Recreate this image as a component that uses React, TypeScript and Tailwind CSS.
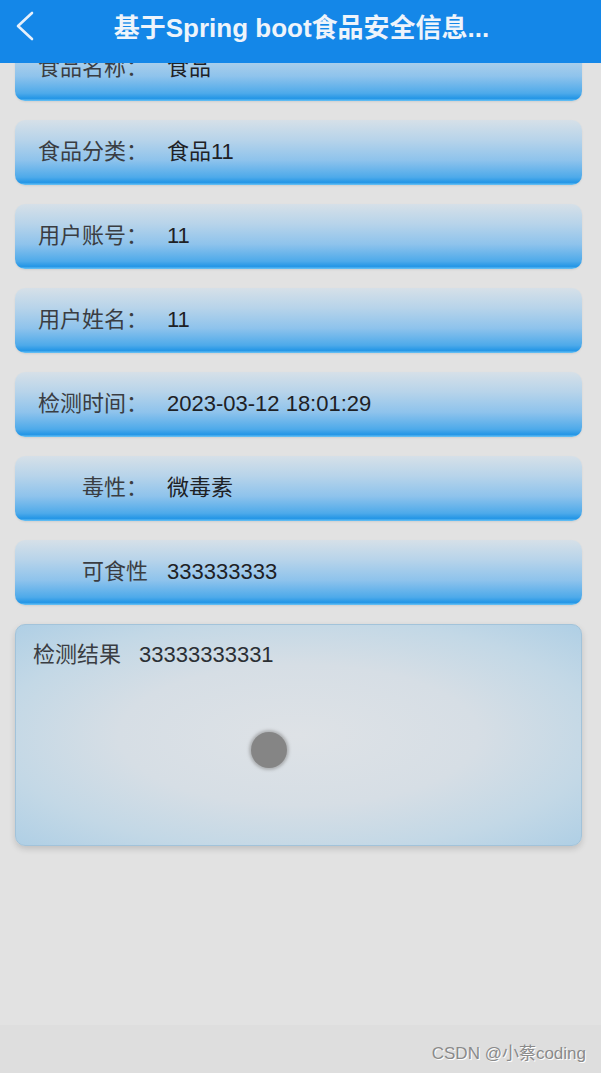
const rows = [
  { label: "食品名称：", value: "食品" },
  { label: "食品分类：", value: "食品11" },
  { label: "用户账号：", value: "11" },
  { label: "用户姓名：", value: "11" },
  { label: "检测时间：", value: "2023-03-12 18:01:29" },
  { label: "毒性：", value: "微毒素" },
  { label: "可食性", value: "333333333" },
];

function BackIcon() {
  return (
    <svg width="20" height="32" viewBox="0 0 20 32" fill="none">
      <polyline
        points="17,3 3,16 17,29"
        stroke="#e6f0fb"
        strokeWidth="2.6"
        strokeLinecap="round"
        strokeLinejoin="round"
      />
    </svg>
  );
}

function Row({ label, value }: { label: string; value: string }) {
  return (
    <div className="flex items-center h-[65px] pb-[2px] rounded-[10px] bg-[linear-gradient(to_bottom,#d6e0e8_0%,#b8d4ea_30%,#8ec3ec_62%,#4eaaea_88%,#2496e6_96%,#6cc4f6_100%)] shadow-[0_1px_2px_rgba(0,0,0,0.08)]">
      <div className="w-[133px] pl-[22px] text-right text-[22px] text-[#3a3d42] whitespace-nowrap">
        {label}
      </div>
      <div className="ml-[19px] text-[22px] text-[#1e2125] whitespace-nowrap">{value}</div>
    </div>
  );
}

export default function App() {
  return (
    <div
      className="relative flex flex-col w-[601px] h-[1073px] overflow-hidden bg-[#e2e2e2]"
      style={{ fontFamily: '"Liberation Sans", "Noto Sans CJK SC", sans-serif' }}
    >
      {/* header */}
      <header className="absolute top-0 left-0 right-0 z-10 flex items-center h-[63px] pb-[6px] bg-[#1487e8]">
        <button className="absolute left-[15px] top-[10px]">
          <BackIcon />
        </button>
        <h1 className="w-full text-center text-[26px] font-bold text-[#eef4fb] pl-[2px]">
          基于Spring boot食品安全信息...
        </h1>
      </header>

      <main className="flex-1 flex flex-col gap-[19px] pl-[15px] pr-[19px] pt-[36px]">
        {rows.map((r) => (
          <Row key={r.label} label={r.label} value={r.value} />
        ))}

        <div className="relative h-[222px] rounded-[10px] border border-[#a2c3da] bg-[radial-gradient(ellipse_at_center,#dee2e6_0%,#d6dee5_45%,#c3d8e6_75%,#afcfe5_100%)] shadow-[0_3px_6px_rgba(0,0,0,0.15)]">
          <div className="flex items-center pt-[13px] pl-[17px] text-[22px]">
            <span className="text-[#3a3d42]">检测结果</span>
            <span className="ml-[18px] text-[#2b2f34]">33333333331</span>
          </div>
          <div className="absolute left-[235px] top-[107px] w-[36px] h-[36px] rounded-full bg-[#858585] shadow-[0_0_3px_2px_rgba(130,130,130,0.5)]" />
        </div>
      </main>

      <footer className="flex items-center justify-end h-[48px] pt-[10px] pr-[15px] bg-[#dedede]">
        <span className="text-[17px] text-[#8a8a8a] [text-shadow:1px_1px_0_#ffffff]">CSDN @小蔡coding</span>
      </footer>
    </div>
  );
}
